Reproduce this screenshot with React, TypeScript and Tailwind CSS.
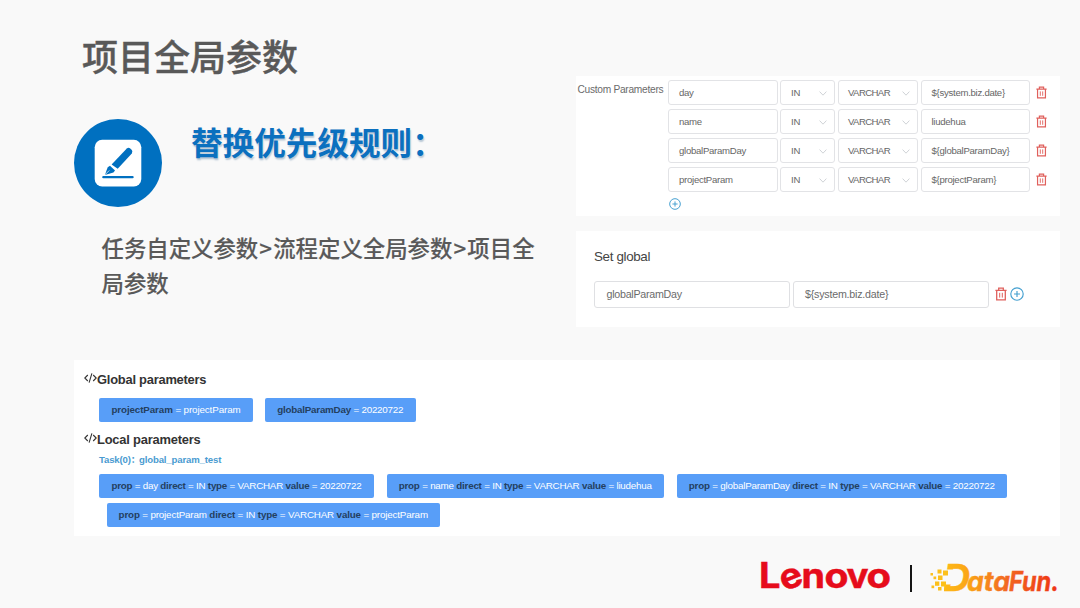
import React from "react";

const UI = "font-['Liberation_Sans',Arial,'Noto_Sans_CJK_SC',sans-serif]";
const CJK = "font-['Noto_Sans_CJK_SC',sans-serif]";

function Trash({ className }: { className: string }) {
  return (
    <svg viewBox="0 0 12 14" className={className} fill="none" stroke="#e0605c" strokeWidth="1.3">
      <path d="M0.4 3.3h11.2M3.7 3.2V1.2h4.6v2M1.7 3.5v9.3h8.6V3.5" />
      <path d="M4.7 5.8v4.8M7.3 5.8v4.8" strokeWidth="1" />
    </svg>
  );
}

function Plus({ className }: { className: string }) {
  return (
    <svg viewBox="0 0 14 14" className={className} fill="none" stroke="#45a0d0" strokeWidth="1.15">
      <circle cx="7" cy="7" r="6.2" />
      <path d="M4 7h6M7 4v6" />
    </svg>
  );
}

function Chevron() {
  return (
    <svg viewBox="0 0 8 5" className="h-[5px] w-2" fill="none" stroke="#c3c6cc" strokeWidth="0.8">
      <path d="M0.6 0.6 4 4.2 7.4 0.6" />
    </svg>
  );
}

function CodeIcon() {
  return (
    <svg viewBox="0 0 13 10" className="mb-1 h-[10px] w-[13px]" fill="none" stroke="#333" strokeWidth="1.1">
      <path d="M3.8 2 0.8 5l3 3M9.2 2l3 3-3 3M7.9 0.3 5.1 9.7" />
    </svg>
  );
}

const box =
  "flex h-[25px] items-center rounded-[3px] border border-[#e2e3e6] bg-white pt-px text-[9.6px] tracking-[-0.28px] text-[#666]";

function Row({ name, value }: { name: string; value: string }) {
  return (
    <div className="flex items-center">
      <div className={`${box} w-[110px] pl-[10px]`}>{name}</div>
      <div className={`${box} ml-[2px] w-[55px] justify-between pr-[7px] pl-[10px]`}>
        IN
        <Chevron />
      </div>
      <div className={`${box} ml-[3px] w-[80px] justify-between pr-[7px] pl-[9px]`}>
        <span className="tracking-[-0.6px]">VARCHAR</span>
        <Chevron />
      </div>
      <div className={`${box} ml-[3px] w-[109px] pl-[9.5px]`}>{value}</div>
      <Trash className="ml-[6px] h-[13px] w-[11px]" />
    </div>
  );
}

function Tag({ pairs, className }: { pairs: [string, string][]; className: string }) {
  return (
    <div
      className={`flex h-6 items-center justify-center rounded-[2px] bg-[#589ef8] pt-px text-[9.8px] whitespace-pre text-white ${className}`}
    >
      <span>
        {pairs.map(([k, v], i) => (
          <React.Fragment key={k}>
            {i > 0 && " "}
            <b className="text-[#24405f]">{k}</b>
            {" = " + v}
          </React.Fragment>
        ))}
      </span>
    </div>
  );
}

const local = (name: string, value: string): [string, string][] => [
  ["prop", name],
  ["direct", "IN"],
  ["type", "VARCHAR"],
  ["value", value],
];

const pixels = [
  [1.5, 19, 2.5],
  [8.5, 15.5, 4],
  [14, 16.5, 5],
  [4.5, 22.5, 2.7],
  [9, 21.5, 4.5],
  [2.5, 31.5, 2.7],
  [6, 27.5, 4.3],
  [12, 27.5, 5],
  [9, 33, 3.5],
];

export default function App() {
  return (
    <div className={`flex h-[608px] w-[1080px] flex-col overflow-hidden bg-[#f9f9f9] ${UI}`}>
      <div className="flex h-[360px]">
        <div className={`w-[576px] pt-[28px] ${CJK}`}>
          <h1 className="ml-[82px] text-[36px] leading-[54px] font-medium text-[#595959] [-webkit-text-stroke:0.4px_#595959]">
            项目全局参数
          </h1>
          <div className="mt-[37px] ml-[74px] flex">
            <div className="flex size-[88px] items-center justify-center rounded-full bg-[#0070c0]">
              <svg viewBox="0 0 48 48" className="size-12">
                <rect x="0.7" y="0.8" width="46.6" height="46.6" rx="7.5" fill="#fff" />
                <path d="M17.6 25.4 32.8 9.6Q34.3 8.2 36 9.3L37.8 11Q38.9 12.3 37.8 14.5L23.7 29.8Z" fill="#0070c0" />
                <path d="M16 26.7 21 31.4 19.4 33.6 10.9 35.9 13.7 28.3Z" fill="#0070c0" />
                <path d="M10.9 35.9 15.3 31.4" stroke="#fff" strokeWidth="0.7" />
                <path d="M9.3 38.2h29.3" stroke="#0070c0" strokeWidth="2.2" strokeLinecap="round" />
              </svg>
            </div>
            <h2 className="-mt-[2px] ml-[29px] h-[48px] text-[31.6px] leading-[48px] font-bold text-[#0b70bf] [text-shadow:1px_1.5px_1.5px_#b8c8d6]">
              替换优先级规则：
            </h2>
          </div>
          <p className="mt-[23px] ml-[101.5px] text-[22.4px] leading-[35px] font-medium whitespace-nowrap text-[#595959] [-webkit-text-stroke:0.15px_#595959]">
            任务自定义参数<span className="inline-block w-[15px] text-center">&gt;</span>流程定义全局参数
            <span className="inline-block w-[15px] text-center">&gt;</span>项目全
            <br />
            局参数
          </p>
        </div>

        <div className="flex w-[484px] flex-col pt-[76px]">
          <section className="flex h-[140px] bg-white pt-[4px] pl-[1.5px]">
            <div className="w-[90.5px] pt-[3px] text-[10.2px] leading-[14px] tracking-[-0.28px] whitespace-nowrap text-[#6b6b6b]">
              Custom Parameters
            </div>
            <div className="flex flex-col gap-1">
              <Row name="day" value="${system.biz.date}" />
              <Row name="name" value="liudehua" />
              <Row name="globalParamDay" value="${globalParamDay}" />
              <Row name="projectParam" value="${projectParam}" />
              <Plus className="mt-[2px] ml-[0.5px] size-3" />
            </div>
          </section>
          <section className="mt-[14.5px] h-[96.5px] bg-white px-[18px] pt-[17px]">
            <h3 className="text-[13.4px] leading-[18px] tracking-[-0.35px] text-[#444]">Set global</h3>
            <div className="mt-[15px] flex items-center">
              <div className="flex h-[27px] w-[196px] items-center rounded-[3px] border border-[#dfe0e3] pt-px pl-[11.5px] text-[10.7px] tracking-[-0.27px] text-[#6b6b6b]">
                globalParamDay
              </div>
              <div className="ml-[3px] flex h-[27px] w-[196px] items-center rounded-[3px] border border-[#dfe0e3] pt-px pl-[11px] text-[10.7px] tracking-[-0.22px] text-[#6b6b6b]">
                {"${system.biz.date}"}
              </div>
              <Trash className="ml-[6px] h-[14px] w-[12px]" />
              <Plus className="ml-[3px] size-[14px]" />
            </div>
          </section>
        </div>
      </div>

      <section className="mr-5 ml-[74px] h-[176px] bg-white pt-[11px]">
        <h3 className="ml-[10px] flex h-[18px] items-center text-[12.9px] font-bold tracking-[-0.23px] text-[#333]">
          <CodeIcon />
          Global parameters
        </h3>
        <div className="mt-[9px] ml-[25px] flex gap-3">
          <Tag pairs={[["projectParam", "projectParam"]]} className="w-[154px] tracking-[-0.11px]" />
          <Tag pairs={[["globalParamDay", "20220722"]]} className="w-[150.5px] tracking-[-0.22px]" />
        </div>
        <h3 className="mt-[9px] ml-[10px] flex h-[18px] items-center text-[12.9px] font-bold tracking-[-0.2px] text-[#333]">
          <CodeIcon />
          Local parameters
        </h3>
        <div className="mt-[3px] ml-[25px] flex h-4 items-center text-[9.6px] font-bold tracking-[-0.15px] text-[#4a9bd1]">
          <span className="w-[40px] whitespace-nowrap">
            Task(0)<span className={CJK}>：</span>
          </span>
          <span>global_param_test</span>
        </div>
        <div className="mt-[6px] ml-[25px] flex gap-[12.5px]">
          <Tag pairs={local("day", "20220722")} className="w-[275px] tracking-[-0.24px]" />
          <Tag pairs={local("name", "liudehua")} className="w-[277.5px] tracking-[-0.22px]" />
          <Tag pairs={local("globalParamDay", "20220722")} className="w-[330.5px] tracking-[-0.21px]" />
        </div>
        <Tag
          pairs={local("projectParam", "projectParam")}
          className="mt-[5px] ml-[32.5px] w-[333.5px] tracking-[-0.16px]"
        />
      </section>

      <footer className="flex flex-1 items-start justify-end pt-[18px] pr-5">
        <svg viewBox="0 0 132 44" className="h-11 w-[132px] overflow-visible">
          <g
            fill="#e60c1b"
            stroke="#e60c1b"
            strokeWidth="0.5"
            fontFamily="Inter, sans-serif"
            fontWeight="700"
            fontSize="35"
          >
            <text x="-2" y="33.7" textLength="21.5" lengthAdjust="spacingAndGlyphs">L</text>
            <text x="18.7" y="34.2" textLength="22.5" lengthAdjust="spacingAndGlyphs" transform="rotate(-22 29.7 24)">e</text>
            <text x="40.5" y="33.7" textLength="23.5" lengthAdjust="spacingAndGlyphs">n</text>
            <text x="63.5" y="33.7" textLength="24" lengthAdjust="spacingAndGlyphs">o</text>
            <text x="85.5" y="33.7" textLength="22" lengthAdjust="spacingAndGlyphs">v</text>
            <text x="105.5" y="33.7" textLength="24.5" lengthAdjust="spacingAndGlyphs">o</text>
          </g>
        </svg>
        <div className="mt-[11px] ml-[17px] h-[27px] w-[2px] bg-[#151515]" />
        <svg viewBox="0 0 131 44" className="ml-[17px] h-11 w-[131px] overflow-visible">
          <defs>
            <linearGradient id="brand" gradientUnits="userSpaceOnUse" x1="0" y1="0" x2="131" y2="0">
              <stop offset="0" stopColor="#ffc719" />
              <stop offset="0.3" stopColor="#fba516" />
              <stop offset="0.6" stopColor="#f26722" />
              <stop offset="1" stopColor="#ee3212" />
            </linearGradient>
            <clipPath id="bowl">
              <path d="M19 5h25v34H15v-8.5h12l3-15H17Z" />
            </clipPath>
          </defs>
          <g
            fill="url(#brand)"
            stroke="url(#brand)"
            strokeWidth="0.4"
            fontFamily="Inter, sans-serif"
            fontStyle="italic"
            fontWeight="700"
          >
            <text x="14" y="36.8" fontSize="37.5" clipPath="url(#bowl)">D</text>
            <text x="38" y="36.8" fontSize="27" textLength="43" lengthAdjust="spacingAndGlyphs">ata</text>
            <text x="80" y="36.8" fontSize="27" textLength="50" lengthAdjust="spacingAndGlyphs">Fun.</text>
          </g>
          <g fill="#fcc01b">
            {pixels.map(([x, y, s]) => (
              <rect key={`${x}-${y}`} x={x} y={y} width={s} height={s} />
            ))}
          </g>
        </svg>
      </footer>
    </div>
  );
}
